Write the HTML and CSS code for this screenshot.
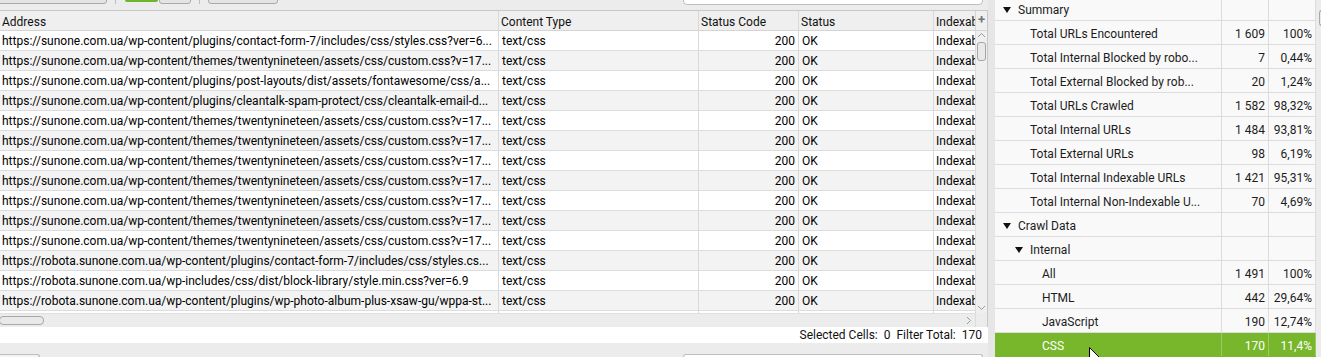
FILE: index.html
```html
<!DOCTYPE html>
<html>
<head>
<meta charset="utf-8">
<link rel="stylesheet" href="styles.css">
</head>
<body>
<div class="app">
  <div class="left">
    <div class="toolbar">
      <div class="tb-btn tb-wide"></div>
      <div class="tb-sep"></div>
      <div class="tb-green"></div>
      <div class="tb-btn tb-small"></div>
      <div class="tb-sep"></div>
      <div class="tb-btn tb-mid"></div>
      <div class="tb-spacer"></div>
      <div class="tb-search"></div>
    </div>
    <div class="grid">
      <div class="thead">
        <div class="cell c1">Address</div>
        <div class="cell c2">Content Type</div>
        <div class="cell c3">Status Code</div>
        <div class="cell c4">Status</div>
        <div class="cell c5">Indexab</div>
        <div class="plus">+</div>
      </div>
      <div class="body-wrap">
        <div class="tbody">
          <div class="row"><div class="cell c1">https://sunone.com.ua/wp-content/plugins/contact-form-7/includes/css/styles.css?ver=6...</div><div class="cell c2">text/css</div><div class="cell c3 num">200</div><div class="cell c4">OK</div><div class="cell c5">Indexab</div></div>
          <div class="row"><div class="cell c1">https://sunone.com.ua/wp-content/themes/twentynineteen/assets/css/custom.css?v=17...</div><div class="cell c2">text/css</div><div class="cell c3 num">200</div><div class="cell c4">OK</div><div class="cell c5">Indexab</div></div>
          <div class="row"><div class="cell c1">https://sunone.com.ua/wp-content/plugins/post-layouts/dist/assets/fontawesome/css/a...</div><div class="cell c2">text/css</div><div class="cell c3 num">200</div><div class="cell c4">OK</div><div class="cell c5">Indexab</div></div>
          <div class="row"><div class="cell c1">https://sunone.com.ua/wp-content/plugins/cleantalk-spam-protect/css/cleantalk-email-d...</div><div class="cell c2">text/css</div><div class="cell c3 num">200</div><div class="cell c4">OK</div><div class="cell c5">Indexab</div></div>
          <div class="row"><div class="cell c1">https://sunone.com.ua/wp-content/themes/twentynineteen/assets/css/custom.css?v=17...</div><div class="cell c2">text/css</div><div class="cell c3 num">200</div><div class="cell c4">OK</div><div class="cell c5">Indexab</div></div>
          <div class="row"><div class="cell c1">https://sunone.com.ua/wp-content/themes/twentynineteen/assets/css/custom.css?v=17...</div><div class="cell c2">text/css</div><div class="cell c3 num">200</div><div class="cell c4">OK</div><div class="cell c5">Indexab</div></div>
          <div class="row"><div class="cell c1">https://sunone.com.ua/wp-content/themes/twentynineteen/assets/css/custom.css?v=17...</div><div class="cell c2">text/css</div><div class="cell c3 num">200</div><div class="cell c4">OK</div><div class="cell c5">Indexab</div></div>
          <div class="row"><div class="cell c1">https://sunone.com.ua/wp-content/themes/twentynineteen/assets/css/custom.css?v=17...</div><div class="cell c2">text/css</div><div class="cell c3 num">200</div><div class="cell c4">OK</div><div class="cell c5">Indexab</div></div>
          <div class="row"><div class="cell c1">https://sunone.com.ua/wp-content/themes/twentynineteen/assets/css/custom.css?v=17...</div><div class="cell c2">text/css</div><div class="cell c3 num">200</div><div class="cell c4">OK</div><div class="cell c5">Indexab</div></div>
          <div class="row"><div class="cell c1">https://sunone.com.ua/wp-content/themes/twentynineteen/assets/css/custom.css?v=17...</div><div class="cell c2">text/css</div><div class="cell c3 num">200</div><div class="cell c4">OK</div><div class="cell c5">Indexab</div></div>
          <div class="row"><div class="cell c1">https://sunone.com.ua/wp-content/themes/twentynineteen/assets/css/custom.css?v=17...</div><div class="cell c2">text/css</div><div class="cell c3 num">200</div><div class="cell c4">OK</div><div class="cell c5">Indexab</div></div>
          <div class="row"><div class="cell c1">https://robota.sunone.com.ua/wp-content/plugins/contact-form-7/includes/css/styles.cs...</div><div class="cell c2">text/css</div><div class="cell c3 num">200</div><div class="cell c4">OK</div><div class="cell c5">Indexab</div></div>
          <div class="row"><div class="cell c1">https://robota.sunone.com.ua/wp-includes/css/dist/block-library/style.min.css?ver=6.9</div><div class="cell c2">text/css</div><div class="cell c3 num">200</div><div class="cell c4">OK</div><div class="cell c5">Indexab</div></div>
          <div class="row"><div class="cell c1">https://robota.sunone.com.ua/wp-content/plugins/wp-photo-album-plus-xsaw-gu/wppa-st...</div><div class="cell c2">text/css</div><div class="cell c3 num">200</div><div class="cell c4">OK</div><div class="cell c5">Indexab</div></div>
          <div class="row row-partial"><div class="cell c1"></div><div class="cell c2"></div><div class="cell c3"></div><div class="cell c4"></div><div class="cell c5"></div></div>
        </div>
        <div class="vscroll">
          <svg class="chev" width="9" height="6" viewBox="0 0 9 6"><path d="M1 5 L4.5 1.5 L8 5" fill="none" stroke="#9a9a9a" stroke-width="1"/></svg>
          <div class="vthumb"></div>
          <div class="vgap"></div>
          <svg class="chev" width="9" height="6" viewBox="0 0 9 6"><path d="M1 1 L4.5 4.5 L8 1" fill="none" stroke="#9a9a9a" stroke-width="1"/></svg>
        </div>
      </div>
      <div class="hrow">
        <div class="hscroll">
          <div class="hthumb"></div>
          <svg class="hchev" width="6" height="9" viewBox="0 0 6 9"><path d="M1 1 L4.5 4.5 L1 8" fill="none" stroke="#9a9a9a" stroke-width="1"/></svg>
        </div>
        <div class="corner"></div>
      </div>
    </div>
    <div class="statusbar">
      <span>Selected Cells:</span><span>0</span><span>Filter Total:</span><span>170</span>
    </div>
    <div class="bottom">
      <div class="bt-box bt-left"></div>
      <div class="bt-box bt-right"></div>
    </div>
  </div>
  <div class="splitter"></div>
  <div class="right">
    <div class="tree">
      <div class="trow"><div class="tl lv0"><span class="tri"></span>Summary</div><div class="tn"></div><div class="tp"></div></div>
      <div class="trow"><div class="tl lv1">Total URLs Encountered</div><div class="tn">1 609</div><div class="tp">100%</div></div>
      <div class="trow"><div class="tl lv1">Total Internal Blocked by robo...</div><div class="tn">7</div><div class="tp">0,44%</div></div>
      <div class="trow"><div class="tl lv1">Total External Blocked by rob...</div><div class="tn">20</div><div class="tp">1,24%</div></div>
      <div class="trow"><div class="tl lv1">Total URLs Crawled</div><div class="tn">1 582</div><div class="tp">98,32%</div></div>
      <div class="trow"><div class="tl lv1">Total Internal URLs</div><div class="tn">1 484</div><div class="tp">93,81%</div></div>
      <div class="trow"><div class="tl lv1">Total External URLs</div><div class="tn">98</div><div class="tp">6,19%</div></div>
      <div class="trow"><div class="tl lv1">Total Internal Indexable URLs</div><div class="tn">1 421</div><div class="tp">95,31%</div></div>
      <div class="trow"><div class="tl lv1">Total Internal Non-Indexable U...</div><div class="tn">70</div><div class="tp">4,69%</div></div>
      <div class="trow"><div class="tl lv0"><span class="tri"></span>Crawl Data</div><div class="tn"></div><div class="tp"></div></div>
      <div class="trow"><div class="tl lv1t"><span class="tri"></span>Internal</div><div class="tn"></div><div class="tp"></div></div>
      <div class="trow"><div class="tl lv2">All</div><div class="tn">1 491</div><div class="tp">100%</div></div>
      <div class="trow"><div class="tl lv2">HTML</div><div class="tn">442</div><div class="tp">29,64%</div></div>
      <div class="trow"><div class="tl lv2">JavaScript</div><div class="tn">190</div><div class="tp">12,74%</div></div>
      <div class="trow sel"><div class="tl lv2">CSS</div><div class="tn">170</div><div class="tp">11,4%</div></div>
    </div>
    <div class="rscroll"><div class="rthumb"></div></div>
    <svg class="cursor" width="13" height="20" viewBox="0 0 13 20"><path d="M0.5 0.5 L0.5 16 L4 12.5 L6.5 18.5 L9 17.5 L6.5 11.5 L11.5 11.5 Z" fill="#fff" stroke="#000" stroke-width="1" stroke-linejoin="miter"/></svg>
  </div>
</div>
</body>
</html>
```

FILE: styles.css
```css
* { box-sizing: border-box; }
html, body { margin: 0; padding: 0; }
body {
  width: 1321px;
  height: 357px;
  overflow: hidden;
  background: #ececec;
  font-family: Roboto, "Liberation Sans", sans-serif;
  font-size: 12px;
  color: #000;
}
.app {
  display: flex;
  height: 357px;
}
.left {
  width: 988px;
  display: flex;
  flex-direction: column;
  flex: none;
}

/* toolbar */
.toolbar {
  height: 10px;
  display: flex;
  align-items: flex-start;
  overflow: hidden;
}
.tb-btn {
  height: 24px;
  margin-top: -20px;
  border: 1px solid #a9a9a9;
  border-radius: 3px;
  background: #e4e4e4;
}
.tb-wide { width: 113px; margin-left: -6px; }
.tb-sep { width: 1px; height: 4px; background: #bdbdbd; margin: 0 8px 0 8px; }
.tb-green { width: 33px; height: 22px; margin-top: -20px; background: #6db52b; border-radius: 2px; margin-left: 1px; }
.tb-small { width: 32px; margin-left: 1px; }
.tb-mid { width: 70px; margin-left: 0; }
.tb-spacer { flex: 1; }
.tb-search {
  width: 300px;
  height: 25px;
  margin-top: -20px;
  margin-right: 5px;
  background: #fff;
  border: 1px solid #bdbdbd;
  border-radius: 4px;
}

/* grid */
.grid {
  border-top: 1px solid #c8c8c8;
  border-right: 1px solid #c8c8c8;
  display: flex;
  flex-direction: column;
}
.thead {
  display: flex;
  height: 20px;
  background: #efefef;
  border-bottom: 1px solid #d4d4d4;
}
.cell {
  height: 100%;
  border-right: 1px solid #d9d9d9;
  padding: 1px 3px 0;
  white-space: nowrap;
  overflow: hidden;
  line-height: 19px;
  flex: none;
}
.thead .cell { padding-top: 3px; line-height: 17px; padding-left: 2px; color: #111; }
.c1 { width: 499px; padding-left: 2px; }
.c2 { width: 200px; }
.c3 { width: 100px; }
.c4 { width: 135px; }
.c5 { width: 41px; border-right: none; padding-left: 2px; }
.num { text-align: right; padding-right: 3px; }
.plus {
  width: 12px;
  border-left: 1px solid #d4d4d4;
  color: #777;
  font-weight: bold;
  font-size: 13px;
  line-height: 17px;
  text-align: center;
}
.body-wrap {
  display: flex;
  height: 282px;
}
.tbody {
  width: 975px;
  overflow: hidden;
  background: #fff;
}
.row {
  display: flex;
  height: 20px;
  border-bottom: 1px solid #dcdcdc;
}
.row:nth-child(even) { background: #f3f3f3; }
.vscroll {
  width: 12px;
  border-left: 1px solid #dcdcdc;
  background: #efefef;
  display: flex;
  flex-direction: column;
  align-items: center;
  padding: 1px 0 2px;
}
.chev { display: block; flex: none; }
.vthumb {
  width: 9px;
  height: 19px;
  margin-top: 4px;
  border: 1px solid #a5a5a5;
  border-radius: 3px;
  background: #e9e9e9;
  flex: none;
}
.vgap { flex: 1; }
.hrow {
  display: flex;
  height: 14px;
}
.hscroll {
  width: 975px;
  background: #ececec;
  border-top: 1px solid #e0e0e0;
  display: flex;
  align-items: center;
  padding-right: 2px;
}
.hthumb {
  width: 45px;
  height: 9px;
  margin-left: -1px;
  border: 1px solid #a8a8a8;
  border-radius: 4px;
  background: #e9e9e9;
}
.hchev { margin-left: auto; margin-right: 1px; }
.corner { width: 12px; background: #ececec; border-left: 1px solid #dcdcdc; }

/* status bar */
.statusbar {
  height: 16px;
  background: #fff;
  display: flex;
  justify-content: flex-end;
  align-items: center;
  gap: 6px;
  padding-right: 6px;
  line-height: 16px;
  color: #111;
}
.bottom {
  flex: 1;
  display: flex;
  align-items: flex-end;
  overflow: hidden;
}
.bt-box {
  height: 3px;
  border: 1px solid #bdbdbd;
  border-bottom: none;
  border-radius: 3px 3px 0 0;
  background: #f4f4f4;
}
.bt-left { width: 42px; margin-left: -2px; }
.bt-right { width: 300px; margin-left: auto; margin-right: 5px; background: #fff; }

.splitter {
  width: 7px;
  flex: none;
  background: #e6e6e6;
}

/* right tree */
.right {
  flex: 1;
  display: flex;
  position: relative;
}
.tree {
  width: 321px;
  margin-top: -3px;
  flex: none;
  background: #f9f9f9;
  color: #1c1c1c;
}
.trow {
  display: flex;
  height: 24px;
  border-bottom: 1px solid #dcdcdc;
  line-height: 20px;
}
.tl {
  width: 227px;
  padding-top: 3px;
  border-right: 1px solid #dcdcdc;
  white-space: nowrap;
  overflow: hidden;
  display: flex;
  align-items: center;
}
.tn, .tp {
  width: 47px;
  padding-top: 3px;
  border-right: 1px solid #dcdcdc;
  text-align: right;
  padding-right: 3px;
}
.lv0 { padding-left: 8px; }
.lv1 { padding-left: 35px; }
.lv1t { padding-left: 20px; }
.lv2 { padding-left: 47px; }
.tri {
  width: 0;
  height: 0;
  border-left: 4px solid transparent;
  border-right: 4px solid transparent;
  border-top: 6px solid #111;
  margin-right: 7px;
  margin-top: 0;
}
.sel { background: #78b62c; color: #fff; border-bottom-color: #78b62c; }
.sel .tl, .sel .tn, .sel .tp { border-right-color: #9acb63; }
.rscroll {
  flex: 1;
  background: #ececec;
  padding-top: 10px;
  padding-left: 3px;
}
.rthumb {
  width: 6px;
  height: 16px;
  border: 1px solid #a8a8a8;
  border-right: none;
  border-radius: 3px 0 0 3px;
  background: #eaeaea;
}
.cursor {
  position: absolute;
  left: 94px;
  top: 347px;
}
```
